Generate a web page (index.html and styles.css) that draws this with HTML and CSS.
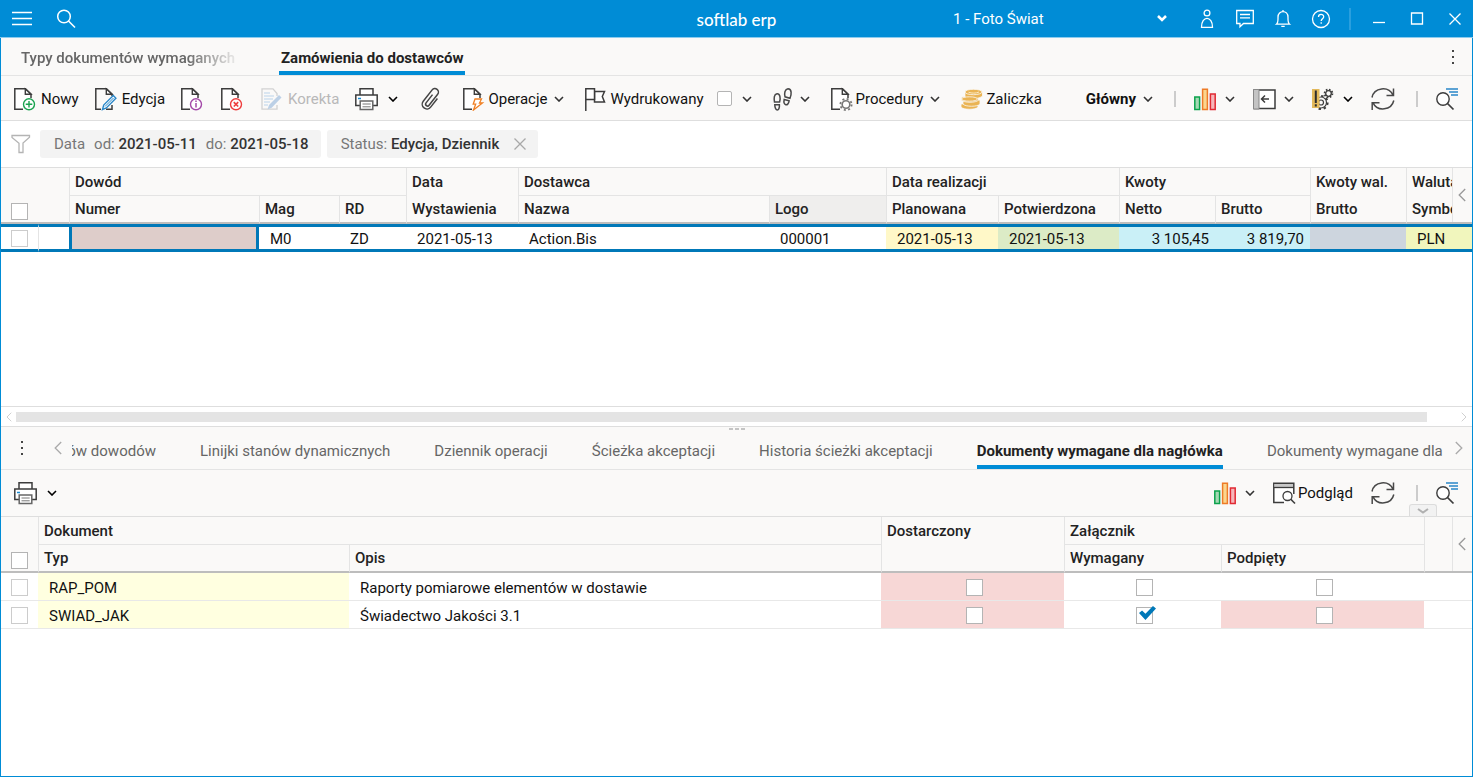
FILE: index.html
```html
<!DOCTYPE html>
<html lang="pl">
<head>
  <meta charset="UTF-8">
  <meta name="viewport" content="width=device-width, initial-scale=1">
  <title>softlab erp</title>
  <link rel="stylesheet" href="styles.css">
</head>
<body>
  <svg class="sprite" aria-hidden="true">
    <symbol id="page" viewBox="0 0 24 24">
      <path d="M17 13V7L11.5 1.8H.8V22.2H8" fill="#fff" stroke="none"/>
      <path d="M17 11V7L11.5 1.8H.8V22.2H9" fill="none" stroke="#3c3c3c" stroke-width="1.5"/>
      <path d="M11.3 2V7.3H17z" fill="#fff" stroke="#3c3c3c" stroke-width="1.4"/>
    </symbol>
    <symbol id="new" viewBox="0 0 24 24">
      <use href="#page"/>
      <circle cx="15" cy="17.3" r="5.5" fill="#fff" stroke="#1ba350" stroke-width="1.4"/>
      <path d="M15 14v6.6M11.7 17.3h6.6" stroke="#1ba350" stroke-width="1.4"/>
    </symbol>
    <symbol id="edit" viewBox="0 0 24 24">
      <path d="M17 9V7L11.5 1.8H.8V22.2H6M11 22.2H17V18" fill="none" stroke="#3c3c3c" stroke-width="1.5"/>
      <path d="M11.3 2V7.3H17z" fill="#fff" stroke="#3c3c3c" stroke-width="1.4"/>
      <path d="M7.5 22.5l1.2-4.5L18.3 8.6l2.6 2.6-9.6 9.8z" fill="#fff" stroke="#2a87c8" stroke-width="1.4"/>
      <path d="M10 19.5l8.5-8.5" stroke="#2a87c8"/>
    </symbol>
    <symbol id="info" viewBox="0 0 24 24">
      <use href="#page"/>
      <circle cx="15" cy="17.3" r="5.5" fill="#fff" stroke="#a349a8" stroke-width="1.4"/>
      <path d="M15 16v4.6M15 13.5v1.4" stroke="#a349a8" stroke-width="1.5"/>
    </symbol>
    <symbol id="delete" viewBox="0 0 24 24">
      <use href="#page"/>
      <circle cx="15" cy="17.3" r="5.5" fill="#fff" stroke="#ee3e3e" stroke-width="1.4"/>
      <path d="M12.8 15.1l4.4 4.4M17.2 15.1l-4.4 4.4" stroke="#ee3e3e" stroke-width="1.6"/>
    </symbol>
    <symbol id="correct" viewBox="0 0 24 24">
      <path d="M16 9V6.5L12 1.8H1V22.2H16V18" fill="none" stroke="#d2d2d2" stroke-width="1.3"/>
      <path d="M3 6h6M3 9h10M3 12h9M3 15h6M3 18h4" stroke="#b9d3ea" stroke-width="1.2"/>
      <path d="M6.5 22.5l1.5-4.5L18 8l2.5 2.5-9.8 10.3z" fill="#bcd0e6"/>
    </symbol>
    <symbol id="print" viewBox="0 0 24 24">
      <g fill="#fff" stroke="#3c3c3c" stroke-width="1.5">
        <path d="M5 8V1.8h13V8"/>
        <path d="M5 18.5H.8V8h21.4v10.5H18"/>
        <path d="M5.2 14h12.6v8.5H5.2z" stroke="#666"/>
      </g>
      <path d="M7.5 17h8.2M7.5 19.8h8.2" stroke="#777"/>
      <path d="M3 11.5h3" stroke="#1a8ad0" stroke-width="1.5"/>
    </symbol>
    <symbol id="clip" viewBox="0 0 24 24">
      <path d="M16.5 7v11a4.7 4.7 0 0 1-9.4 0V3.5a3.5 3.5 0 0 1 7 0V17.5a1.9 1.9 0 0 1-3.8 0V7" transform="rotate(38 11 12)" fill="none" stroke="#444" stroke-width="1.5"/>
    </symbol>
    <symbol id="bolt" viewBox="0 0 24 24">
      <use href="#page"/>
      <path d="M12 12h6.5l-2 4h3L10.5 23l2.2-5.8h-2.5z" fill="#fff" stroke="#f08024" stroke-width="1.3"/>
    </symbol>
    <symbol id="flag" viewBox="0 0 24 24">
      <g fill="#fff" stroke="#3c3c3c" stroke-width="1.5">
        <path d="M9.5 4.5H19.5L17.3 9.5l2.2 5.5H9.5z"/>
        <path d="M.8 24V1.8H9.5V12.5H.8"/>
      </g>
    </symbol>
    <symbol id="feet" viewBox="0 0 20 24">
      <g fill="none" stroke="#484848" stroke-width="1.5">
        <path d="M1.5 15C.8 11 1 7.3 4 6.8c3-.3 3.8 4.2 2.600 8.2zM1.8 17.8h4.6c.6 6.8-4.6 6.8-4.600 0z"/>
        <path d="M12 9.8C11 6 12 2 15 1.7c4 0 3.600 6 2 9.6zM11.2 12.5l4.9 1.3c-1 6.4-6.200 4.500-4.900-1.300z"/>
      </g>
    </symbol>
    <symbol id="procedure" viewBox="0 0 24 24">
      <use href="#page"/>
      <circle cx="15" cy="17.5" r="5.600" fill="#faf9f8" stroke="#777" stroke-width="1.8" stroke-dasharray="2 2.4"/>
      <circle cx="15" cy="17.5" r="3.800" fill="#fff" stroke="#777" stroke-width="1.6"/>
    </symbol>
    <symbol id="coins" viewBox="0 0 24 24">
      <g fill="#eab454" stroke="#faf9f8" stroke-width=".8">
        <path d="M0 17v3c2 3 15 3 17 0v-4z"/>
        <path d="M2 14v3c2 3 15 3 17 0v-4z"/>
        <path d="M.5 10v3c2 3 15 3 17 0v-4z"/>
        <path d="M4 5v5c2 3 15 2 17.5-1V4z"/>
        <ellipse cx="12.5" cy="5" rx="8.5" ry="2.7"/>
        <ellipse cx="8.5" cy="12" rx="8" ry="2.2"/>
      </g>
      <path d="M7.5 5.2c3 1.3 8 1.2 10.5-.2" fill="none" stroke="#fbe8c0"/>
    </symbol>
    <symbol id="chart" viewBox="0 0 24 24">
      <path d="M.8 10h4.8v12.5H.8z" fill="#a5d8b4" stroke="#0ca24c" stroke-width="1.5"/>
      <path d="M8.6 2.3h4.8v20.2H8.6z" fill="#fbd68e" stroke="#ee7b27" stroke-width="1.5"/>
      <path d="M16.4 7h4.8v15.500h-4.8z" fill="#f6b6ba" stroke="#e12a33" stroke-width="1.5"/>
    </symbol>
    <symbol id="panel" viewBox="0 0 24 24">
      <path d="M1 3h21v18.500H1z" fill="#fff" stroke="#3c3c3c" stroke-width="1.5"/>
      <path d="M.5 2.500h5.500v19.500H.5z" fill="#c4c4c4" stroke="#888"/>
      <path d="M16 12H8.500M12 8.500L8.500 12l3.500 3.500" fill="none" stroke="#3c3c3c" stroke-width="1.5"/>
    </symbol>
    <symbol id="warn" viewBox="0 0 24 24">
      <circle cx="9" cy="15.5" r="6.6" fill="none" stroke="#3c3c3c" stroke-width="2" stroke-dasharray="2.4 2.780"/>
      <circle cx="9" cy="15.5" r="5.5" fill="#faf9f8" stroke="#3c3c3c" stroke-width="1.2"/>
      <circle cx="9" cy="15.5" r="2.5" fill="none" stroke="#3c3c3c" stroke-width="1.2"/>
      <circle cx="16.5" cy="6.5" r="3.8" fill="none" stroke="#3c3c3c" stroke-width="2" stroke-dasharray="1.5 1.480"/>
      <circle cx="16.5" cy="6.5" r="2.8" fill="#faf9f8" stroke="#3c3c3c" stroke-width="1.3"/>
      <path d="M0 2h7.5v19H0z" fill="#e3b95b"/>
      <path d="M2.8 3.5h2v12.5h-2zM2.8 17.3h2v2.2h-2z" fill="#2d2d2d"/>
    </symbol>
    <symbol id="refresh" viewBox="0 0 24 24">
      <path d="M1 10.500C3 .5 17.500-1.500 22 8.300M22.500 1.500v7H15.500M22.800 13.500C20.500 23.500 6.500 25 2 15.800M1.200 23V15.800H8.500" fill="none" stroke="#484848" stroke-width="1.5"/>
    </symbol>
    <symbol id="find" viewBox="0 0 24 24">
      <circle cx="7" cy="12" r="6.2" fill="#fff" stroke="#3c3c3c" stroke-width="1.4"/>
      <path d="M11.5 16.500l6 6" stroke="#3c3c3c" stroke-width="1.7"/>
      <path d="M10 2h12M13 5h9M15 8h7" stroke="#2a87c8" stroke-width="1.5"/>
    </symbol>
    <symbol id="preview" viewBox="0 0 24 24">
      <path d="M11 21.500H.8V2.300h20V13" fill="#fff" stroke="#3c3c3c" stroke-width="1.5"/>
      <path d="M1.500 3h18.500v3H1.500z" fill="#c8c8c8"/>
      <path d="M1 6.500h20" stroke="#3c3c3c" stroke-width="1.3"/>
      <circle cx="14.5" cy="15" r="4.5" fill="#fff" stroke="#3c3c3c" stroke-width="1.3"/>
      <path d="M17.8 18.300l4.200 4.200" stroke="#3c3c3c" stroke-width="1.6"/>
    </symbol>
    <symbol id="chevron" viewBox="0 0 10 6">
      <path d="M1 1l4 4 4-4" fill="none" stroke="currentColor" stroke-width="1.6"/>
    </symbol>
    <symbol id="arrow-left" viewBox="0 0 8 14">
      <path d="M7.2 1L1.2 7l6 6" fill="none" stroke="currentColor" stroke-width="1.3"/>
    </symbol>
    <symbol id="dots" viewBox="0 0 4 16">
      <path d="M1 1h2v2H1zM1 7h2v2H1zM1 13h2v2H1z" fill="#444"/>
    </symbol>
  </svg>

  <div class="app">
    <header class="titlebar">
      <div class="titlebar-left">
        <button aria-label="Menu"><svg width="20" height="20" viewBox="0 0 20 20"><path d="M0 3.5h20M0 9.5h20M0 15.5h20" stroke="#fff" stroke-width="1.3"/></svg></button>
        <button aria-label="Szukaj"><svg width="20" height="20" viewBox="0 0 20 20"><circle cx="8" cy="7.5" r="6.3" fill="none" stroke="#fff" stroke-width="1.5"/><path d="M12.5 12l6.5 6.5" stroke="#fff" stroke-width="1.6"/></svg></button>
      </div>
      <div class="brand">softlab erp</div>
      <div class="titlebar-right">
        <label class="company">
          <select aria-label="Firma"><option>1 - Foto Świat</option></select>
          <svg width="10" height="7" viewBox="0 0 10 7"><path d="M1 1l4 4 4-4" fill="none" stroke="#fff" stroke-width="2.5"/></svg>
        </label>
        <button aria-label="Użytkownik"><svg width="20" height="20" viewBox="0 0 20 20"><g fill="none" stroke="#fff" stroke-width="1.3"><circle cx="10" cy="4" r="2.9"/><path d="M4.5 18.3c-.2-12 11.2-12 11 0z"/></g></svg></button>
        <button aria-label="Wiadomości"><svg width="20" height="20" viewBox="0 0 20 20"><path d="M1.700 1.5h16.6v13H8.5L5 17.8v-3.3H1.700zM5 5.5h10M5 8.8h10" fill="none" stroke="#fff" stroke-width="1.3"/></svg></button>
        <button aria-label="Powiadomienia"><svg width="20" height="20" viewBox="0 0 20 20"><path d="M3.5 15.2c1.8-1.5 1.5-4 1.5-7C5 .8 15 .8 15 8.2c0 3-.3 5.5 1.5 7zM8.3 17.3h3.4M10 1v2" fill="none" stroke="#fff" stroke-width="1.3"/></svg></button>
        <button aria-label="Pomoc"><svg width="20" height="20" viewBox="0 0 20 20"><g fill="none" stroke="#fff" stroke-width="1.3"><circle cx="10" cy="10" r="8.5"/><path d="M7.5 8c0-3.5 5.2-3.3 5.2-.3 0 2-2.5 2-2.5 4.3M10.2 13.3v1.5"/></g></svg></button>
        <span class="titlebar-line"></span>
        <button aria-label="Minimalizuj"><svg width="20" height="20" viewBox="0 0 20 20"><path d="M4 13.5h12" stroke="#fff" stroke-width="1.3"/></svg></button>
        <button aria-label="Maksymalizuj"><svg width="20" height="20" viewBox="0 0 20 20"><path d="M4.5 4h11v11h-11z" fill="none" stroke="#fff" stroke-width="1.3"/></svg></button>
        <button aria-label="Zamknij"><svg width="20" height="20" viewBox="0 0 20 20"><path d="M4.5 4.5l11 11M15.5 4.5l-11 11" stroke="#fff" stroke-width="1.3"/></svg></button>
      </div>
    </header>

    <nav class="tabs main-tabs">
      <a href="#" class="tab faded">Typy dokumentów wymaganych</a>
      <a href="#" class="tab active">Zamówienia do dostawców</a>
      <button class="more" aria-label="Więcej"><svg width="4" height="16"><use href="#dots"/></svg></button>
    </nav>

    <div class="toolbar">
      <div class="tools">
        <button class="tool"><svg class="icon"><use href="#new"/></svg>Nowy</button>
        <button class="tool"><svg class="icon"><use href="#edit"/></svg>Edycja</button>
        <button class="tool" aria-label="Informacje"><svg class="icon"><use href="#info"/></svg></button>
        <button class="tool" aria-label="Usuń"><svg class="icon"><use href="#delete"/></svg></button>
        <button class="tool" disabled><svg class="icon"><use href="#correct"/></svg>Korekta</button>
        <button class="tool" aria-label="Drukuj"><svg class="icon"><use href="#print"/></svg><svg class="chevron dark"><use href="#chevron"/></svg></button>
        <button class="tool" aria-label="Załączniki"><svg class="icon"><use href="#clip"/></svg></button>
      </div>
      <div class="tools tight">
        <button class="tool"><svg class="icon"><use href="#bolt"/></svg>Operacje<svg class="chevron"><use href="#chevron"/></svg></button>
        <div class="tool">
          <svg class="icon"><use href="#flag"/></svg>
          <label for="printed">Wydrukowany</label>
          <input type="checkbox" id="printed" class="check">
          <svg class="chevron"><use href="#chevron"/></svg>
        </div>
        <button class="tool" aria-label="Ścieżka"><svg class="icon narrow"><use href="#feet"/></svg><svg class="chevron"><use href="#chevron"/></svg></button>
        <button class="tool"><svg class="icon"><use href="#procedure"/></svg>Procedury<svg class="chevron"><use href="#chevron"/></svg></button>
        <button class="tool"><svg class="icon"><use href="#coins"/></svg>Zaliczka</button>
      </div>
      <div class="tools tight end">
        <button class="tool strong">Główny<svg class="chevron"><use href="#chevron"/></svg></button>
        <span class="divider"></span>
        <button class="tool" aria-label="Wykres"><svg class="icon"><use href="#chart"/></svg><svg class="chevron"><use href="#chevron"/></svg></button>
        <button class="tool" aria-label="Panel"><svg class="icon"><use href="#panel"/></svg><svg class="chevron"><use href="#chevron"/></svg></button>
        <button class="tool" aria-label="Ustawienia"><svg class="icon"><use href="#warn"/></svg><svg class="chevron dark"><use href="#chevron"/></svg></button>
        <button class="tool" aria-label="Odśwież"><svg class="icon"><use href="#refresh"/></svg></button>
        <span class="divider"></span>
        <button class="tool" aria-label="Znajdź"><svg class="icon"><use href="#find"/></svg></button>
      </div>
    </div>

    <div class="filters">
      <svg width="20" height="20" viewBox="0 0 20 20"><path d="M1 1.5h17.5v1.700L12 9v9.500H8V9.300L1 3.500z" fill="none" stroke="#b4b4b4" stroke-width="1.3"/></svg>
      <div class="chip">
        <span>Data</span>
        <span>od: <b>2021-05-11</b></span>
        <span>do: <b>2021-05-18</b></span>
      </div>
      <div class="chip">
        <span>Status: <b>Edycja, Dziennik</b></span>
        <button aria-label="Usuń filtr"><svg width="12" height="12" viewBox="0 0 12 12"><path d="M.5.5l11 11M11.5.5l-11 11" stroke="#a8a8a8" stroke-width="1.3"/></svg></button>
      </div>
    </div>

    <section class="grid orders">
      <table>
        <colgroup>
          <col class="w37"><col class="w31"><col class="w190"><col class="w80"><col class="w67"><col class="w112"><col><col class="w117"><col class="w112"><col class="w121"><col class="w96"><col class="w95"><col class="w96"><col class="w66">
        </colgroup>
        <thead>
          <tr>
            <th rowspan="2" class="pick"><input type="checkbox" class="check" aria-label="Zaznacz wszystkie"></th>
            <th rowspan="2"></th>
            <th colspan="3" class="line under">Dowód</th>
            <th class="line">Data</th>
            <th colspan="2" class="line under">Dostawca</th>
            <th colspan="2" class="line under">Data realizacji</th>
            <th colspan="2" class="line under">Kwoty</th>
            <th class="line">Kwoty wal.</th>
            <th class="line">Waluta</th>
          </tr>
          <tr>
            <th class="line">Numer</th>
            <th class="line">Mag</th>
            <th class="line">RD</th>
            <th class="line">Wystawienia</th>
            <th class="line">Nazwa</th>
            <th class="line sorted">Logo</th>
            <th class="line">Planowana</th>
            <th class="line">Potwierdzona</th>
            <th class="line">Netto</th>
            <th class="line">Brutto</th>
            <th class="line">Brutto</th>
            <th class="line">Symbol</th>
          </tr>
        </thead>
        <tbody>
          <tr class="selected">
            <td class="pick"><input type="checkbox" class="check soft" aria-label="Zaznacz"></td>
            <td class="line"></td>
            <td class="current"></td>
            <td>M0</td>
            <td>ZD</td>
            <td>2021-05-13</td>
            <td>Action.Bis</td>
            <td>000001</td>
            <td class="yellow">2021-05-13</td>
            <td class="green">2021-05-13</td>
            <td class="cyan num">3 105,45</td>
            <td class="cyan num">3 819,70</td>
            <td class="gray"></td>
            <td class="lime">PLN</td>
          </tr>
        </tbody>
      </table>
      <button class="collapse" aria-label="Zwiń"><svg width="8" height="14"><use href="#arrow-left"/></svg></button>
    </section>

    <div class="scrollbar">
      <svg width="8" height="10"><use href="#arrow-left"/></svg>
      <div class="thumb"></div>
      <svg class="flip" width="8" height="10"><use href="#arrow-left"/></svg>
    </div>

    <nav class="tabs detail-tabs">
      <span class="grip"></span>
      <button class="more" aria-label="Więcej"><svg width="4" height="16"><use href="#dots"/></svg></button>
      <button class="scroll-tabs" aria-label="Poprzednie"><svg width="8" height="14"><use href="#arrow-left"/></svg></button>
      <div class="tab-strip">
        <a href="#" class="tab cut">ów dowodów</a>
        <a href="#" class="tab">Linijki stanów dynamicznych</a>
        <a href="#" class="tab">Dziennik operacji</a>
        <a href="#" class="tab">Ścieżka akceptacji</a>
        <a href="#" class="tab">Historia ścieżki akceptacji</a>
        <a href="#" class="tab active">Dokumenty wymagane dla nagłówka</a>
        <a href="#" class="tab">Dokumenty wymagane dla linijek</a>
      </div>
      <button class="scroll-tabs" aria-label="Następne"><svg class="flip" width="8" height="14"><use href="#arrow-left"/></svg></button>
    </nav>

    <div class="toolbar detail-toolbar">
      <div class="tools">
        <button class="tool" aria-label="Drukuj"><svg class="icon"><use href="#print"/></svg><svg class="chevron dark"><use href="#chevron"/></svg></button>
      </div>
      <div class="tools tight end">
        <button class="tool" aria-label="Wykres"><svg class="icon"><use href="#chart"/></svg><svg class="chevron"><use href="#chevron"/></svg></button>
        <button class="tool"><svg class="icon"><use href="#preview"/></svg>Podgląd</button>
        <button class="tool" aria-label="Odśwież"><svg class="icon"><use href="#refresh"/></svg></button>
        <span class="divider"></span>
        <button class="tool" aria-label="Znajdź"><svg class="icon"><use href="#find"/></svg></button>
      </div>
      <button class="pull" aria-label="Rozwiń"><svg width="12" height="6" viewBox="0 0 12 6"><path d="M1 1l5 3.5L11 1" fill="none" stroke="#b0b0b0" stroke-width="2"/></svg></button>
    </div>

    <section class="grid documents">
      <table>
        <colgroup>
          <col class="w37"><col class="w311"><col><col class="w183"><col class="w157"><col class="w203"><col class="w48">
        </colgroup>
        <thead>
          <tr>
            <th rowspan="2" class="pick"><input type="checkbox" class="check" aria-label="Zaznacz wszystkie"></th>
            <th colspan="2" class="line under">Dokument</th>
            <th class="line">Dostarczony</th>
            <th colspan="2" class="line under">Załącznik</th>
            <th rowspan="2" class="line"></th>
          </tr>
          <tr>
            <th class="line">Typ</th>
            <th class="line">Opis</th>
            <th class="line"></th>
            <th class="line">Wymagany</th>
            <th class="line">Podpięty</th>
          </tr>
        </thead>
        <tbody>
          <tr>
            <td class="pick"><input type="checkbox" class="check soft" aria-label="Zaznacz RAP_POM"></td>
            <td class="cream">RAP_POM</td>
            <td>Raporty pomiarowe elementów w dostawie</td>
            <td class="pink mid"><input type="checkbox" class="check" aria-label="Dostarczony"></td>
            <td class="mid"><input type="checkbox" class="check" aria-label="Wymagany"></td>
            <td class="mid"><input type="checkbox" class="check" aria-label="Podpięty"></td>
            <td></td>
          </tr>
          <tr>
            <td class="pick"><input type="checkbox" class="check soft" aria-label="Zaznacz SWIAD_JAK"></td>
            <td class="cream">SWIAD_JAK</td>
            <td>Świadectwo Jakości 3.1</td>
            <td class="pink mid"><input type="checkbox" class="check" aria-label="Dostarczony"></td>
            <td class="mid"><input type="checkbox" class="check" aria-label="Wymagany" checked></td>
            <td class="pink mid"><input type="checkbox" class="check" aria-label="Podpięty"></td>
            <td></td>
          </tr>
        </tbody>
      </table>
      <button class="collapse" aria-label="Zwiń"><svg width="8" height="14"><use href="#arrow-left"/></svg></button>
    </section>
  </div>
</body>
</html>
```
FILE: styles.css
```css
* {
  box-sizing: border-box;
}
body {
  margin: 0;
  font-family: Roboto, "Liberation Sans", sans-serif;
  font-size: 15px;
  line-height: 20px;
  color: #111;
  background: #fff;
}
button, select {
  font: inherit;
  color: inherit;
  background: none;
  border: none;
  padding: 0;
  cursor: pointer;
}
a {
  color: inherit;
  text-decoration: none;
}
svg {
  display: block;
  flex: none;
}
b {
  font-weight: 500;
}
.sprite {
  position: absolute;
  width: 0;
  height: 0;
}
.app {
  display: flex;
  flex-direction: column;
  min-height: 100vh;
  border: 1px solid #008cd6;
  border-top: none;
}

/* title bar */
.titlebar {
  display: grid;
  grid-template-columns: 1fr auto 1fr;
  align-items: center;
  height: 38px;
  margin: 0 -1px;
  padding: 0 8px 0 12px;
  color: #fff;
  background: #008cd6;
  border-bottom: 1px solid #8ccbee;
}
.titlebar-left {
  display: flex;
  gap: 24px;
}
.titlebar-right {
  display: flex;
  align-items: center;
  justify-content: flex-end;
  gap: 18px;
}
.brand {
  padding: 2px 4px 0 0;
  font-family: Lato, sans-serif;
  font-size: 17px;
  font-weight: 500;
}
.company {
  display: flex;
  align-items: center;
  width: 214px;
  margin-right: 12px;
}
.company select {
  flex: 1;
  appearance: none;
}
.titlebar-line {
  width: 2px;
  height: 22px;
  background: #2a9fde;
}

/* tabs */
.tabs {
  display: flex;
  background: #faf9f8;
  border-bottom: 1px solid #e4e4e4;
  color: #666;
}
.tab {
  flex: none;
  white-space: nowrap;
  border-bottom: 4px solid transparent;
}
.tab.active {
  color: #222;
  font-weight: 700;
  border-color: #008cd6;
}
.main-tabs {
  height: 38px;
  padding: 0 17px 0 18px;
  gap: 37px;
}
.main-tabs .tab {
  padding: 10px 2px 0;
  font-weight: 500;
}
.main-tabs .tab.active {
  font-weight: 700;
}
.main-tabs .faded {
  width: 223px;
  overflow: hidden;
  mask-image: linear-gradient(to right, #000 75%, transparent);
}
.main-tabs .more {
  margin-left: auto;
}
.detail-tabs {
  position: relative;
  height: 43px;
  padding: 0 9px 0 19px;
}
.detail-tabs .tab {
  padding-top: 14px;
}
.scroll-tabs {
  color: #aaa;
}
.detail-tabs .more {
  margin-right: 30px;
}
.tab-strip {
  display: flex;
  flex: 1;
  min-width: 0;
  gap: 44px;
  margin: 0 10px;
  overflow: hidden;
}
.tab.cut {
  display: flex;
  justify-content: flex-end;
  width: 84px;
  overflow: hidden;
}
.flip {
  transform: scaleX(-1);
}
.grip {
  position: absolute;
  top: 1px;
  left: 50%;
  width: 16px;
  height: 2px;
  margin-left: -8px;
  background: repeating-linear-gradient(to right, #c4c4c4 0 4px, transparent 4px 6px);
}

/* toolbars */
.toolbar {
  display: flex;
  align-items: center;
  gap: 20px;
  height: 45px;
  padding: 1px 12px 0 13px;
  background: #faf9f8;
  border-bottom: 1px solid #dedede;
}
.tools {
  display: flex;
  align-items: center;
  gap: 16px;
}
.tools.end {
  gap: 18px;
  margin-left: auto;
}
.tool {
  display: flex;
  align-items: center;
  gap: 3px;
  white-space: nowrap;
}
.tight .tool {
  gap: 1px;
}
.tool:disabled {
  color: #b8b8b8;
}
.tool.strong {
  font-weight: 700;
}
.icon {
  width: 24px;
  height: 24px;
}
.icon.narrow {
  width: 20px;
}
.chevron {
  width: 10px;
  height: 6px;
  margin: 0 5px 0 6px;
  color: #333;
}
.end .chevron {
  margin-right: 0;
}
.chevron.dark {
  color: #000;
}
.divider {
  width: 2px;
  height: 16px;
  margin-left: 3px;
  background: #ccc;
}
.detail-toolbar {
  position: relative;
  height: 47px;
  padding-top: 0;
}
.pull {
  position: absolute;
  right: 35px;
  bottom: 0;
  display: flex;
  align-items: center;
  justify-content: center;
  width: 28px;
  height: 12px;
  background: #f2f2f2;
  border: 1px solid #dcdcdc;
  border-bottom: none;
  border-radius: 3px 3px 0 0;
}

/* filters */
.filters {
  display: flex;
  align-items: center;
  gap: 6px;
  height: 47px;
  padding-left: 10px;
  color: #777;
  border-bottom: 1px solid #dedede;
}
.filters > svg {
  margin-right: 3px;
}
.filters b {
  color: #333;
}
.chip {
  display: flex;
  align-items: center;
  gap: 9px;
  height: 28px;
  padding: 0 12px 0 14px;
  background: #f3f3f3;
  border-radius: 3px;
}
.chip button {
  margin-left: 6px;
}

/* data grids */
.grid {
  position: relative;
  overflow: hidden;
}
.orders {
  flex: 1 0 238px;
}
.documents {
  flex: 1 0 259px;
}
table {
  width: 100%;
  table-layout: fixed;
  border-collapse: separate;
  border-spacing: 0;
}
th, td {
  height: 28px;
  text-align: left;
  white-space: nowrap;
  overflow: hidden;
}
th {
  padding: 0 5px;
  font-weight: 500;
  color: #222;
  background: #faf9f8;
}
td {
  padding: 2px 10px 0 11px;
  border-bottom: 1px solid #e8e8e8;
}
thead tr:last-child th, th[rowspan] {
  border-bottom: 2px solid #bdbdbd;
}
.under {
  border-bottom: 1px solid #e4e4e4;
}
.line {
  border-left: 1px solid #e4e4e4;
}
.sorted {
  background: #efeeed;
}
.pick {
  padding: 0 0 0 10px;
}
th.pick {
  padding-bottom: 2px;
  vertical-align: bottom;
}
.selected .pick {
  padding-bottom: 2px;
}
.mid {
  padding: 0 8px 0 12px;
  text-align: center;
}
.mid .check, .pick .check {
  display: inline-block;
  vertical-align: middle;
}
.num {
  padding-right: 6px;
  text-align: right;
}
.selected td {
  border-top: 3px solid #0078b8;
  border-bottom: 3px solid #0078b8;
}
.selected .current {
  background: #decdca;
  border: 3px solid #0078b8;
}
.yellow { background: #fff8c8; }
.green { background: #dcebc6; }
.cyan { background: #caf0f7; }
.gray { background: #cdd5de; }
.lime { background: #f1f6bd; }
.cream { background: #ffffe0; }
.pink { background: #f7d7d6; }
.collapse {
  position: absolute;
  top: 0;
  right: 0;
  display: flex;
  align-items: center;
  justify-content: center;
  width: 20px;
  height: 54px;
  padding-right: 2px;
  color: #999;
  background: #faf9f8;
  border-left: 1px solid #e4e4e4;
}

.w31 { width: 31px; }
.w37 { width: 37px; }
.w48 { width: 48px; }
.w66 { width: 66px; }
.w67 { width: 67px; }
.w80 { width: 80px; }
.w95 { width: 95px; }
.w96 { width: 96px; }
.w112 { width: 112px; }
.w117 { width: 117px; }
.w121 { width: 121px; }
.w157 { width: 157px; }
.w183 { width: 183px; }
.w190 { width: 190px; }
.w203 { width: 203px; }
.w311 { width: 311px; }

/* tick boxes */
.check {
  position: relative;
  appearance: none;
  width: 17px;
  height: 17px;
  margin: 0;
  background: #fff;
  border: 1px solid #b4b4b4;
}
.check.soft {
  border-color: #ccc;
}
.tool .check {
  width: 15px;
  height: 15px;
  margin: 0 3px 0 12px;
  border-radius: 2px;
}
.check:checked::after {
  content: "";
  position: absolute;
  top: -2px;
  left: 2px;
  width: 17px;
  height: 14px;
  background: #0078b8;
  clip-path: polygon(0 50%, 18% 32%, 38% 55%, 82% 0, 100% 18%, 38% 100%);
}

.scrollbar {
  display: flex;
  align-items: center;
  height: 21px;
  gap: 3px;
  padding: 0 4px;
  color: #ccc;
  border-top: 1px solid #dedede;
  border-bottom: 1px solid #dedede;
}
.thumb {
  flex: 1;
  height: 10px;
  margin-right: 30px;
  background: #e4e4e4;
}
```
